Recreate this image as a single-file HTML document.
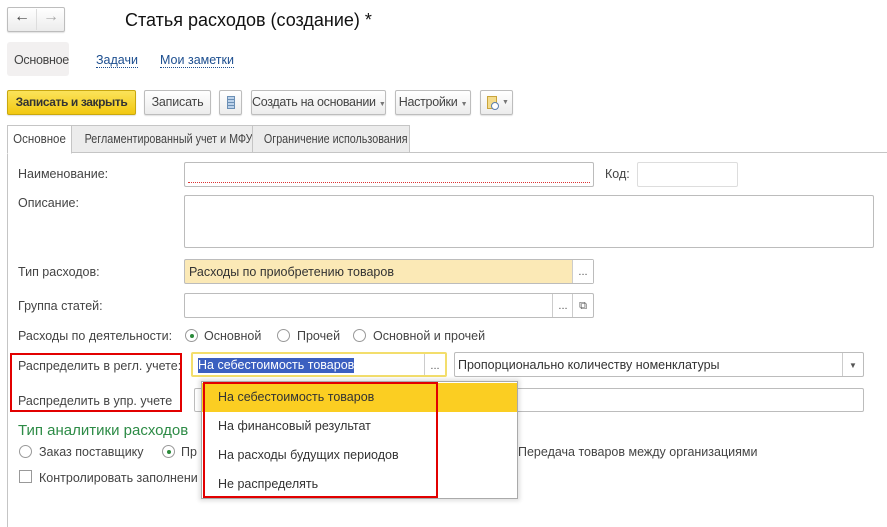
<!DOCTYPE html>
<html><head><meta charset="utf-8"><style>
*{box-sizing:border-box;margin:0;padding:0}
body{width:887px;height:527px;background:#fff;font-family:"Liberation Sans",Arial,sans-serif;font-size:12.5px;color:#333;position:relative;overflow:hidden}
.a{position:absolute;white-space:nowrap}
.btn{position:absolute;border:1px solid #bdbdbd;border-radius:2px;background:linear-gradient(#fff,#ececec);height:25px;line-height:23px;text-align:center;color:#444;box-shadow:0 1px 1px rgba(0,0,0,.12);white-space:nowrap;letter-spacing:-0.2px}
.inp{position:absolute;border:1px solid #bcbcbc;border-radius:2px;background:#fff;height:25px}
.lbl{position:absolute;color:#444;line-height:14px;white-space:nowrap}
.dots{position:absolute;top:0;bottom:0;width:21px;border-left:1px solid #ccc;text-align:center;line-height:25px;font-size:11px;color:#555}
.rad{position:absolute;width:13px;height:13px;border:1px solid #999;border-radius:50%;background:#fff}
.rad.on::after{content:"";position:absolute;left:3.5px;top:3.5px;width:4px;height:4px;border-radius:50%;background:#2a8a3a}
.tab{position:absolute;top:125px;height:28px;border:1px solid #c5c5c5;background:#ececec;line-height:26px;color:#444;white-space:nowrap}
.tab span{position:absolute;left:0;right:0;text-align:center;transform:scaleX(.86)}
.it{position:absolute;left:16px;color:#333;white-space:nowrap}
</style></head><body>
<div class="btn" style="left:7px;top:7px;width:58px;height:25px"></div>
<div class="a" style="left:36px;top:9px;width:1px;height:21px;background:#ddd"></div>
<div class="a" style="left:14px;top:8px;font-size:16px;color:#444;font-weight:bold">&#8592;</div>
<div class="a" style="left:43px;top:8px;font-size:16px;color:#aaa;font-weight:bold">&#8594;</div>
<div class="a" style="left:125px;top:10px;font-size:18px;color:#111">Статья расходов (создание) *</div>
<div class="a" style="left:7px;top:42px;width:62px;height:34px;background:#f2f0f0;border-radius:3px"></div>
<div class="lbl" style="left:14px;top:53px;letter-spacing:-0.3px">Основное</div>
<div class="lbl" style="left:96px;top:53px;color:#1c4e8f;border-bottom:1px dotted #1c4e8f">Задачи</div>
<div class="lbl" style="left:160px;top:53px;color:#1c4e8f;border-bottom:1px dotted #1c4e8f">Мои заметки</div>

<div class="btn" style="left:7px;top:90px;width:129px;background:linear-gradient(#fbe35a,#f2c811);border-color:#c9a80f;font-weight:bold;color:#333;font-size:12px;letter-spacing:-0.4px">Записать и закрыть</div>
<div class="btn" style="left:144px;top:90px;width:67px">Записать</div>
<div class="btn" style="left:219px;top:90px;width:23px"><div class="a" style="left:7px;top:5px;width:8px;height:13px;border:1px solid #6b8fb5;background:repeating-linear-gradient(#bcd2ea 0 2px,#6b8fb5 2px 3px)"></div></div>
<div class="btn" style="left:251px;top:90px;width:135px;letter-spacing:-0.3px">Создать на основании <span style="font-size:7px;color:#777">&#9660;</span></div>
<div class="btn" style="left:395px;top:90px;width:76px;letter-spacing:-0.3px">Настройки <span style="font-size:7px;color:#777">&#9660;</span></div>
<div class="btn" style="left:480px;top:90px;width:33px"><div class="a" style="left:6px;top:5px;width:10px;height:13px;background:#f4dc8c;border:1px solid #c9a43c"></div><div class="a" style="left:10px;top:11px;width:8px;height:8px;border-radius:50%;background:#fff;border:1px solid #5b7fae"></div><span style="position:absolute;left:21px;font-size:7px;color:#777">&#9660;</span></div>

<div class="a" style="left:7px;top:152px;width:880px;height:1px;background:#c5c5c5"></div>
<div class="a" style="left:7px;top:152px;width:1px;height:375px;background:#c5c5c5"></div>
<div class="tab" style="left:71px;width:182px"><span>Регламентированный учет и МФУ</span></div>
<div class="tab" style="left:252px;width:158px"><span>Ограничение использования</span></div>
<div class="tab" style="left:7px;width:65px;background:#fff;border-bottom-color:#fff;height:29px"><span style="transform:scaleX(.92)">Основное</span></div>

<div class="lbl" style="left:18px;top:167px">Наименование:</div>
<div class="inp" style="left:184px;top:162px;width:410px"><div class="a" style="left:3px;right:3px;bottom:3px;border-bottom:1px dotted #d33"></div></div>
<div class="lbl" style="left:605px;top:167px">Код:</div>
<div class="inp" style="left:637px;top:162px;width:101px;border-color:#ddd"></div>
<div class="lbl" style="left:18px;top:196px">Описание:</div>
<div class="inp" style="left:184px;top:195px;width:690px;height:53px"></div>
<div class="lbl" style="left:18px;top:265px">Тип расходов:</div>
<div class="inp" style="left:184px;top:259px;width:410px;background:#fbe9b6"><span class="a" style="left:4px;top:5px">Расходы по приобретению товаров</span><div class="dots" style="right:0;background:#fff">...</div></div>
<div class="lbl" style="left:18px;top:299px">Группа статей:</div>
<div class="inp" style="left:184px;top:293px;width:410px"><div class="dots" style="right:20px">...</div><div class="dots" style="right:0">&#10697;</div></div>
<div class="lbl" style="left:18px;top:329px">Расходы по деятельности:</div>
<div class="rad on" style="left:185px;top:329px"></div><div class="lbl" style="left:204px;top:329px">Основной</div>
<div class="rad" style="left:277px;top:329px"></div><div class="lbl" style="left:297px;top:329px">Прочей</div>
<div class="rad" style="left:353px;top:329px"></div><div class="lbl" style="left:373px;top:329px">Основной и прочей</div>

<div class="lbl" style="left:18px;top:359px">Распределить в регл. учете:</div>
<div class="inp" style="left:191px;top:352px;width:256px;border:2px solid #f3de6c"><span class="a" style="left:5px;top:4px;background:#3b5fc0;color:#fff;line-height:15px">На себестоимость товаров</span><div class="dots" style="right:0">...</div></div>
<div class="inp" style="left:454px;top:352px;width:410px"><span class="a" style="left:3px;top:5px">Пропорционально количеству номенклатуры</span><div class="dots" style="right:0;font-size:8px">&#9660;</div></div>
<div class="lbl" style="left:18px;top:394px">Распределить в упр. учете</div>
<div class="inp" style="left:194px;top:388px;width:670px;height:24px"></div>
<div class="a" style="left:10px;top:353px;width:172px;height:59px;border:2px solid #e20000"></div>

<div class="a" style="left:18px;top:422px;font-size:15px;color:#2d8b46">Тип аналитики расходов</div>
<div class="rad" style="left:19px;top:445px"></div><div class="lbl" style="left:39px;top:445px">Заказ поставщику</div>
<div class="rad on" style="left:162px;top:445px"></div><div class="lbl" style="left:181px;top:445px">Пр</div>
<div class="lbl" style="left:518px;top:445px">Передача товаров между организациями</div>
<div class="a" style="left:19px;top:470px;width:13px;height:13px;border:1px solid #999;background:#fff"></div><div class="lbl" style="left:39px;top:471px">Контролировать заполнени</div>

<div class="a" style="left:201px;top:381px;width:317px;height:118px;background:#fff;border:1px solid #aaa;box-shadow:0 0 4px 2px rgba(0,0,0,.12)">
<div class="a" style="left:0;top:1px;right:0;height:29px;background:#fbce22"></div>
<div class="it" style="top:8px">На себестоимость товаров</div>
<div class="it" style="top:37px">На финансовый результат</div>
<div class="it" style="top:66px">На расходы будущих периодов</div>
<div class="it" style="top:95px">Не распределять</div>
</div>
<div class="a" style="left:203px;top:382px;width:235px;height:116px;border:2px solid #e20000"></div>
</body></html>
